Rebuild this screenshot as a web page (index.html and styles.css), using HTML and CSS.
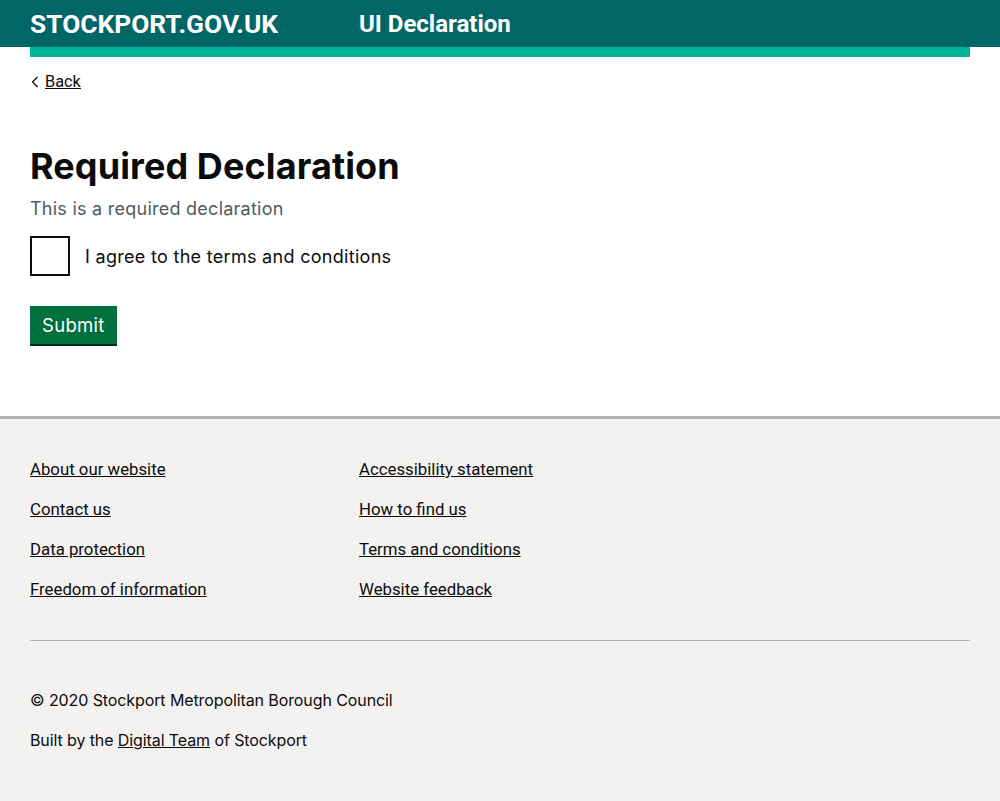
FILE: index.html
```html
<!DOCTYPE html>
<html lang="en">
<head>
<meta charset="utf-8">
<title>UI Declaration</title>
<link rel="stylesheet" href="styles.css">
</head>
<body>
<header class="site-header">
  <div class="header-inner">
    <a class="logo" href="#">STOCKPORT.GOV.UK</a>
    <span class="service-name">UI Declaration</span>
  </div>
</header>
<div class="accent-wrap"><div class="accent"></div></div>
<main class="main">
  <a class="back" href="#"><svg class="chev" width="8" height="12" viewBox="0 0 8 12"><path d="M6.5 1 L1.5 6 L6.5 11" fill="none" stroke="#0b0c0c" stroke-width="1.2"/></svg><span>Back</span></a>
  <h1 class="title">Required Declaration</h1>
  <p class="hint">This is a required declaration</p>
  <label class="check">
    <span class="box"></span>
    <span class="check-label">I agree to the terms and conditions</span>
  </label>
  <button class="submit" type="button">Submit</button>
</main>
<footer class="footer">
  <div class="footer-inner">
    <div class="links">
      <a href="#">About our website</a>
      <a href="#">Accessibility statement</a>
      <a href="#">Contact us</a>
      <a href="#">How to find us</a>
      <a href="#">Data protection</a>
      <a href="#">Terms and conditions</a>
      <a href="#">Freedom of information</a>
      <a href="#">Website feedback</a>
    </div>
    <hr class="divider">
    <p class="meta">© 2020 Stockport Metropolitan Borough Council</p>
    <p class="meta">Built by the <a href="#">Digital Team</a> of Stockport</p>
  </div>
</footer>
</body>
</html>
```

FILE: styles.css
```css
* { box-sizing: border-box; }
html, body { margin: 0; padding: 0; }
body {
  font-family: "Inter", "Noto Sans", sans-serif;
  color: #0b0c0c;
  background: #f3f2f1;
}
.site-header {
  background: #006666;
  height: 47px;
}
.header-inner {
  display: flex;
  align-items: center;
  height: 47px;
  padding: 0 30px;
}
.logo {
  color: #fff;
  text-decoration: none;
  font-family: "Roboto", sans-serif;
  font-weight: 700;
  font-size: 26.3px;
  width: 329px;
}
.service-name {
  color: #fff;
  font-family: "Roboto", sans-serif;
  font-weight: 700;
  font-size: 24px;
}
.accent-wrap {
  background: #fff;
  padding: 0 30px;
}
.accent {
  height: 10px;
  background: #00b39a;
}
.main {
  background: #fff;
  padding: 14px 30px 72px;
  border-bottom: 3px solid #b1b4b6;
}
.back {
  display: inline-flex;
  align-items: center;
  gap: 6px;
  color: #0b0c0c;
  font-family: "Roboto", sans-serif;
  font-size: 16.3px;
  line-height: 22px;
}
.back span { text-decoration: underline; }
.chev { margin-left: 1px; }
.title {
  margin: 51px 0 0;
  font-size: 36px;
  font-weight: 700;
  line-height: 44px;
  letter-spacing: 0.1px;
}
.hint {
  margin: 9px 0 0;
  color: #505a5f;
  font-size: 18px;
  line-height: 24px;
  letter-spacing: 0.25px;
}
.check {
  display: flex;
  align-items: center;
  margin-top: 15px;
}
.box {
  width: 40px;
  height: 40px;
  border: 2px solid #0b0c0c;
  background: #fff;
  flex: none;
}
.check-label {
  margin-left: 15px;
  font-size: 18px;
  letter-spacing: 0.3px;
}
.submit {
  display: block;
  margin-top: 30px;
  height: 38px;
  padding: 0 12px;
  background: #00703c;
  color: #fff;
  border: 0;
  box-shadow: 0 2px 0 #002d18;
  font-family: "Inter", "Noto Sans", sans-serif;
  font-size: 18.5px;
  letter-spacing: 0.3px;
  cursor: pointer;
}
.footer {
  background: #f3f2f1;
  padding: 39px 30px 0;
  height: 382px;
}
.links {
  display: grid;
  grid-template-columns: 329px 329px;
  row-gap: 18px;
}
.links a {
  color: #0b0c0c;
  font-family: "Roboto", sans-serif;
  font-size: 16.8px;
  line-height: 22px;
  justify-self: start;
}
.divider {
  margin: 40px 0 0;
  border: 0;
  border-top: 1px solid #b1b4b6;
}
.meta {
  margin: 0;
  font-size: 16px;
  line-height: 22px;
  letter-spacing: -0.1px;
}
.divider + .meta { margin-top: 48px; }
.meta + .meta { margin-top: 18px; }
.meta a { color: #0b0c0c; }
```
